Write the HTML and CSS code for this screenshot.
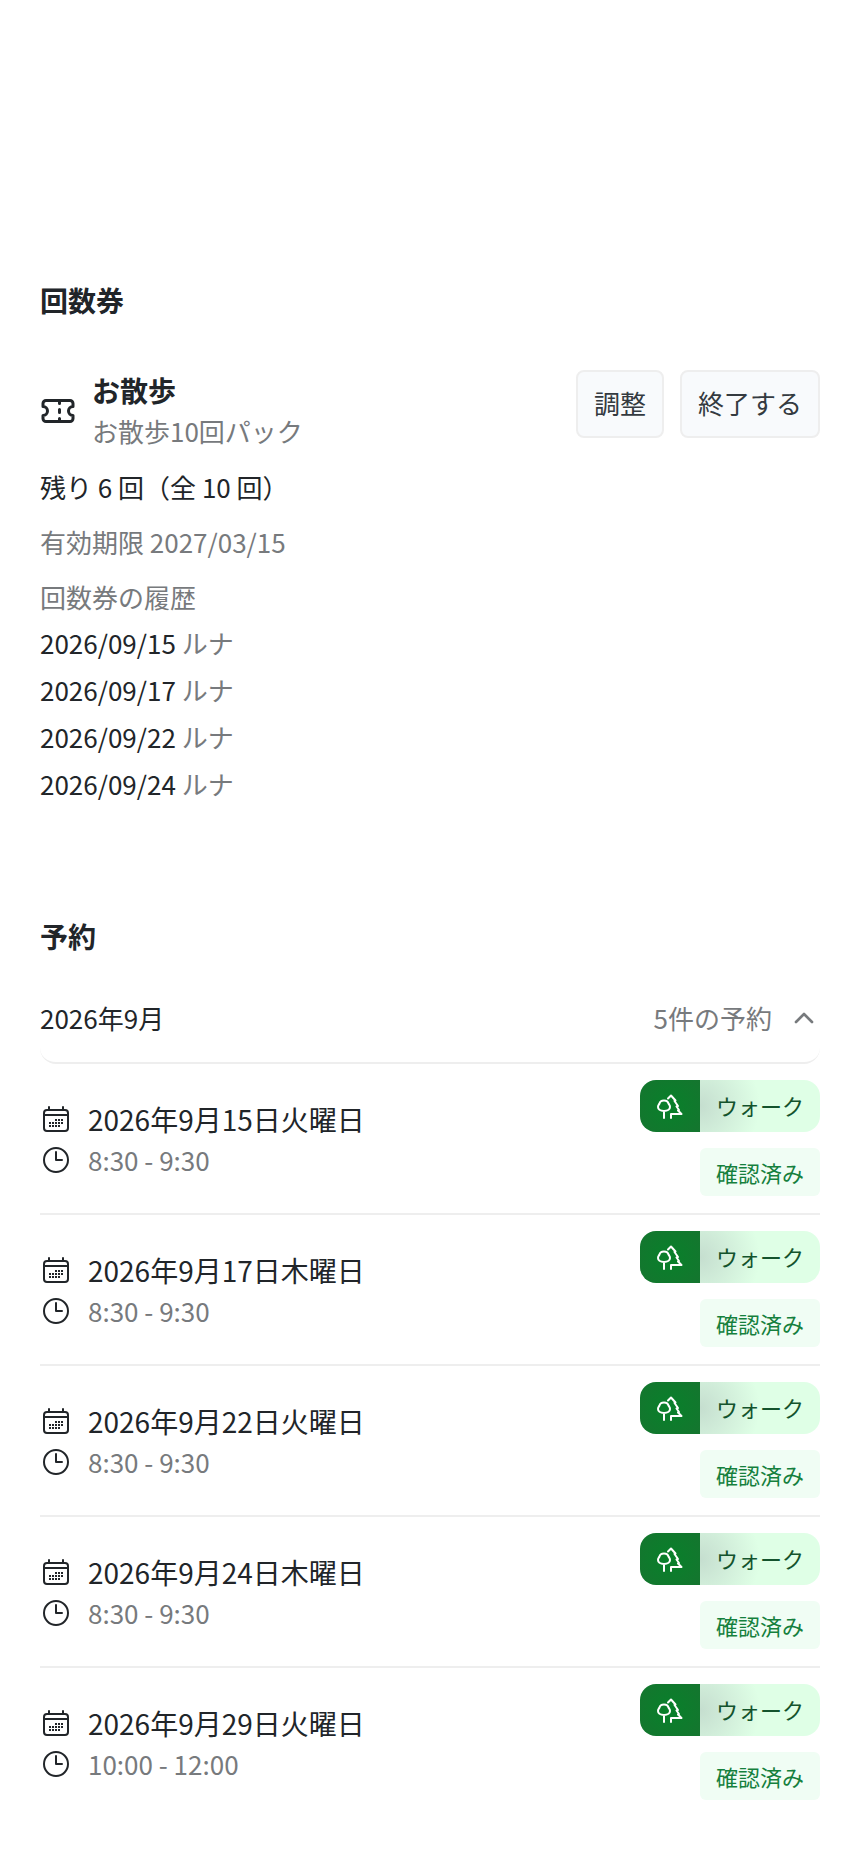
FILE: index.html
```html
<!DOCTYPE html>
<html lang="ja">
<head>
<meta charset="utf-8">
<meta name="viewport" content="width=device-width, initial-scale=1">
<title>回数券と予約</title>
<link rel="stylesheet" href="styles.css">
</head>
<body>
<svg class="sprite" aria-hidden="true">
  <symbol id="ticket" viewBox="0 0 24 24"><path d="M2 9a3 3 0 0 1 0 6v2a2 2 0 0 0 2 2h16a2 2 0 0 0 2-2v-2a3 3 0 0 1 0-6V7a2 2 0 0 0-2-2H4a2 2 0 0 0-2 2ZM13 5v2M13 11v2M13 17v2"/></symbol>
  <symbol id="chevron" viewBox="0 0 24 24"><path d="m6 15 6-6 6 6"/></symbol>
  <symbol id="calendar" viewBox="0 0 32 32"><rect x="4" y="7" width="24" height="21" rx="3"/><path d="M4 12h24M9 4v2M23 4v2"/><path class="dots" d="M15 17h8M9 20h14M9 23h11" stroke-dasharray="2 1"/></symbol>
  <symbol id="clock" viewBox="0 0 32 32"><circle cx="16" cy="16" r="12"/><path d="M16 8v8h6"/></symbol>
  <symbol id="trees" viewBox="0 0 28 28"><path d="M8 26V19M8 19C4 19 2 17 2 15c0-2 1-2.500 1.500-3.500C4 9 6 8.500 8 8.500s4 .5 4.500 3C13 12.500 14 13 14 15c0 2-2 4-6 4ZM12 6.500l3-3 4.500 5-1 .5 3.500 5-1.500.5 2.500 3.500-1 .5L25.500 22H15v4"/></symbol>
</svg>
<main class="page">
  <section class="section">
    <h2 class="heading">回数券</h2>
    <div class="pack">
      <svg class="pack-icon"><use href="#ticket"/></svg>
      <div class="pack-text">
        <h3 class="pack-name">お散歩</h3>
        <p class="pack-plan muted">お散歩10回パック</p>
      </div>
      <div class="actions">
        <button class="button" type="button">調整</button>
        <button class="button" type="button">終了する</button>
      </div>
    </div>
    <p class="detail">残り 6 回（全 10 回）</p>
    <p class="detail muted">有効期限 2027/03/15</p>
    <p class="detail muted">回数券の履歴</p>
    <ul class="history">
      <li>2026/09/15 <span class="muted">ルナ</span></li>
      <li>2026/09/17 <span class="muted">ルナ</span></li>
      <li>2026/09/22 <span class="muted">ルナ</span></li>
      <li>2026/09/24 <span class="muted">ルナ</span></li>
    </ul>
  </section>
  <section class="section">
    <h2 class="heading">予約</h2>
    <button class="month" type="button" aria-expanded="true">
      <span>2026年9月</span>
      <span class="month-count">5件の予約<svg class="icon chevron"><use href="#chevron"/></svg></span>
    </button>
    <ul class="bookings">
      <li class="booking">
        <div class="when">
          <div class="line date"><svg class="icon"><use href="#calendar"/></svg>2026年9月15日火曜日</div>
          <div class="line time"><svg class="icon"><use href="#clock"/></svg><span class="muted">8:30 - 9:30</span></div>
        </div>
        <div class="tags">
          <div class="service"><span class="service-icon"><svg class="tree"><use href="#trees"/></svg></span><span class="service-name">ウォーク</span></div>
          <span class="status">確認済み</span>
        </div>
      </li>
      <li class="booking">
        <div class="when">
          <div class="line date"><svg class="icon"><use href="#calendar"/></svg>2026年9月17日木曜日</div>
          <div class="line time"><svg class="icon"><use href="#clock"/></svg><span class="muted">8:30 - 9:30</span></div>
        </div>
        <div class="tags">
          <div class="service"><span class="service-icon"><svg class="tree"><use href="#trees"/></svg></span><span class="service-name">ウォーク</span></div>
          <span class="status">確認済み</span>
        </div>
      </li>
      <li class="booking">
        <div class="when">
          <div class="line date"><svg class="icon"><use href="#calendar"/></svg>2026年9月22日火曜日</div>
          <div class="line time"><svg class="icon"><use href="#clock"/></svg><span class="muted">8:30 - 9:30</span></div>
        </div>
        <div class="tags">
          <div class="service"><span class="service-icon"><svg class="tree"><use href="#trees"/></svg></span><span class="service-name">ウォーク</span></div>
          <span class="status">確認済み</span>
        </div>
      </li>
      <li class="booking">
        <div class="when">
          <div class="line date"><svg class="icon"><use href="#calendar"/></svg>2026年9月24日木曜日</div>
          <div class="line time"><svg class="icon"><use href="#clock"/></svg><span class="muted">8:30 - 9:30</span></div>
        </div>
        <div class="tags">
          <div class="service"><span class="service-icon"><svg class="tree"><use href="#trees"/></svg></span><span class="service-name">ウォーク</span></div>
          <span class="status">確認済み</span>
        </div>
      </li>
      <li class="booking">
        <div class="when">
          <div class="line date"><svg class="icon"><use href="#calendar"/></svg>2026年9月29日火曜日</div>
          <div class="line time"><svg class="icon"><use href="#clock"/></svg><span class="muted">10:00 - 12:00</span></div>
        </div>
        <div class="tags">
          <div class="service"><span class="service-icon"><svg class="tree"><use href="#trees"/></svg></span><span class="service-name">ウォーク</span></div>
          <span class="status">確認済み</span>
        </div>
      </li>
    </ul>
  </section>
</main>
</body>
</html>
```
FILE: styles.css
```css
* { box-sizing: border-box; }
body {
  margin: 0;
  background: #fff;
  color: #212529;
  font-family: "Noto Sans CJK JP", sans-serif;
  font-size: 26px;
  line-height: 40px;
}
h2, h3, p, ul { margin: 0; padding: 0; }
ul { list-style: none; }
svg { fill: none; stroke: currentColor; stroke-width: 2; stroke-linecap: round; stroke-linejoin: round; flex: none; }
.sprite { display: none; }
.page { padding: 280px 40px 40px; }
.section + .section { margin-top: 109px; }
.heading { font-size: 28px; line-height: 40px; font-weight: 700; }
.muted { color: #777a7d; }

.pack { display: flex; align-items: center; gap: 16px; margin-top: 50px; }
.pack-icon { width: 36px; height: 36px; }
.pack-text { flex: 1; }
.pack-name { font-size: 28px; line-height: 40px; font-weight: 700; }
.pack-plan { line-height: 42px; }
.actions { display: flex; gap: 16px; align-self: flex-start; }
.button {
  padding: 11px 16px 13px;
  border: 2px solid #eee;
  border-radius: 8px;
  background: #f8fafc;
  color: #343a40;
  font: inherit;
}
.detail { margin-top: 15px; }
.history { margin-top: 2px; line-height: 47px; }

.month {
  display: flex;
  align-items: center;
  justify-content: space-between;
  width: 100%;
  margin-top: 18px;
  padding: 24px 0;
  border: 0;
  border-bottom: 2px solid #eee;
  border-radius: 16px;
  background: none;
  color: inherit;
  font: inherit;
}
.month-count { display: flex; align-items: center; gap: 16px; color: #777a7d; }
.icon { width: 32px; height: 32px; }
.booking {
  display: flex;
  align-items: center;
  justify-content: space-between;
  padding: 16px 0 17px;
}
.booking + .booking { border-top: 2px solid #eee; }
.line { display: flex; align-items: center; gap: 16px; }
.date { font-size: 28px; line-height: 44px; }
.time { line-height: 38px; }
.dots { stroke-linecap: butt; }
.tags { display: flex; flex-direction: column; align-items: flex-end; gap: 16px; font-size: 22px; line-height: 32px; }
.service { display: flex; overflow: hidden; border-radius: 16px; }
.service-icon {
  display: flex;
  align-items: center;
  justify-content: center;
  width: 60px;
  background: radial-gradient(circle, #08802a, #15752f);
  color: #fff;
}
.tree { width: 28px; height: 28px; }
.service-name { padding: 9px 16px 11px; background: radial-gradient(circle at left, #c5decf, #dfffe6 60px); color: #14532d; }
.status { padding: 8px 16px; border-radius: 6px; background: #f0fdf4; color: #15803d; }
```
